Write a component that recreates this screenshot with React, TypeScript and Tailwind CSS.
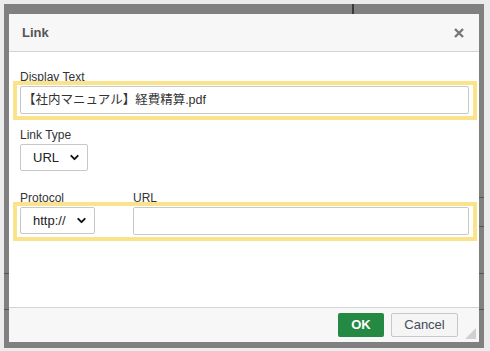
import { ChevronDown } from "lucide-react";

const font = { fontFamily: '"Liberation Sans", Arial, "Noto Sans CJK JP", sans-serif' };

function FakeSelect({ label, width }: { label: string; width: string }) {
  return (
    <div
      className={`${width} h-[27px] flex items-center justify-between pl-[12px] pr-[6px] border border-[#c8c8c8] rounded-[2px] bg-white text-[13px] text-[#222]`}
    >
      <span>{label}</span>
      <ChevronDown className="w-[13px] h-[13px] text-[#111]" strokeWidth={3.5} />
    </div>
  );
}

export default function App() {
  return (
    <div
      style={font}
      className="w-[490px] h-[351px] bg-[#ececec] pt-[4px] pl-[4px] pr-[6px] pb-[3px]"
    >
      <div className="relative w-[480px] h-[344px] bg-[#808080] pt-[10px] pl-[5px] pr-[5px] pb-[6px]">
        {/* page content showing through the backdrop */}
        <div className="absolute left-[348px] top-0 w-[2px] h-[10px] bg-[#3a3a3a]" />
        <div className="absolute right-0 top-[193px] w-[5px] h-px bg-[#555]" />
        <div className="absolute right-0 top-[222px] w-[5px] h-px bg-[#555]" />
        <div className="absolute right-0 top-[269px] w-[5px] h-px bg-[#555]" />
        <div className="absolute right-0 top-[305px] w-[5px] h-px bg-[#555]" />
        <div className="absolute left-0 top-[269px] w-[5px] h-px bg-[#555]" />
        <div className="absolute left-0 top-[305px] w-[5px] h-px bg-[#555]" />

        <div className="relative w-[470px] h-[328px] bg-white flex flex-col">
          <div className="h-[38px] shrink-0 bg-[#f7f7f7] border-b border-[#d4d4d4] flex items-center justify-between pl-[13px] pr-[15px]">
            <span className="text-[13px] font-bold text-[#555]">Link</span>
            <svg width="10" height="10" viewBox="0 0 10 10" className="text-[#777]">
              <path d="M1 1 L9 9 M9 1 L1 9" stroke="currentColor" strokeWidth="2.4" />
            </svg>
          </div>

          <div className="flex-1 pl-[11px] pr-[10px] pt-[18px] text-[12px] text-[#333]">
            <div className="leading-[14px] h-[11px]">Display Text</div>
            <div className="relative -ml-[7px] -mr-[8px] border-4 border-[#fbe38c] bg-white pt-[1px] pb-[2px] pl-[3px] pr-[4px]">
              <div className="h-[28px] border border-[#c8c8c8] rounded-[2px] flex items-center pl-[2px] text-[12.5px] text-[#333]">
                【社内マニュアル】経費精算.pdf
              </div>
            </div>

            <div className="mt-[8px] leading-[14px]">Link Type</div>
            <div className="mt-[2px]">
              <FakeSelect label="URL" width="w-[68px]" />
            </div>

            <div className="mt-[20px] flex leading-[14px] h-[11px]">
              <span className="w-[113px]">Protocol</span>
              <span>URL</span>
            </div>
            <div className="relative -ml-[7px] -mr-[8px] border-4 border-[#fbe38c] bg-white pt-[1px] pb-[2px] pl-[3px] pr-[4px] flex gap-[38px]">
              <FakeSelect label="http://" width="w-[75px] shrink-0" />
              <div className="flex-1 h-[28px] border border-[#c8c8c8] rounded-[2px]" />
            </div>
          </div>

          <div className="relative h-[35px] shrink-0 bg-[#f7f7f7] border-t border-[#d4d4d4] flex items-center justify-end gap-[7px] pr-[21px]">
            <button className="w-[46px] h-[24px] bg-[#248a43] rounded-[2px] text-white text-[13px] font-bold">
              OK
            </button>
            <button className="w-[67px] h-[24px] bg-[#f5f5f5] border border-[#c8c8c8] rounded-[2px] text-[#444b55] text-[13px]">
              Cancel
            </button>
            <svg width="11" height="11" viewBox="0 0 11 11" className="absolute right-[3px] bottom-[3px]">
              <path d="M11 0 L11 11 L0 11 Z" fill="#d0d0d0" />
            </svg>
          </div>
        </div>
      </div>
    </div>
  );
}
